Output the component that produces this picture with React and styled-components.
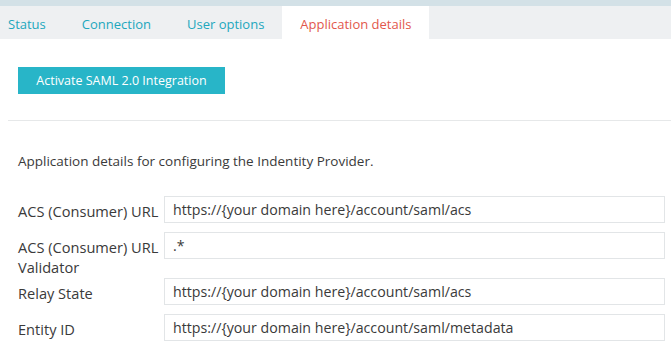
import React from "react";
import styled, { createGlobalStyle } from "styled-components";

const GlobalStyle = createGlobalStyle`
  html, body {
    margin: 0;
    padding: 0;
    background: #fff;
  }
  body {
    font-family: "Open Sans", Lato, sans-serif;
    color: #3a3a3a;
  }
`;

const Page = styled.div`
  width: 671px;
  height: 364px;
  overflow: hidden;
  border-top: 6px solid #d3e1e7;
  box-sizing: border-box;
`;

const TabBar = styled.div`
  display: flex;
  height: 33px;
  background: #eef0f2;
`;

const Tab = styled.div`
  display: flex;
  align-items: center;
  padding: 3px 18px 0 ${({ $first }) => ($first ? 8 : 18)}px;
  font-size: 13px;
  color: ${({ $active }) => ($active ? "#e2574c" : "#22a7bd")};
  background: ${({ $active }) => ($active ? "#fff" : "transparent")};
`;

const Toolbar = styled.div`
  padding: 28px 18px 26px;
`;

const Button = styled.button`
  width: 207px;
  height: 27px;
  border: none;
  background: #28b5c8;
  color: #fff;
  font-family: "Open Sans", Lato, sans-serif;
  font-size: 12.5px;
  cursor: pointer;
`;

const Rule = styled.hr`
  margin: 0 0 0 8px;
  border: none;
  border-top: 1px solid #e6e8e9;
`;

const Intro = styled.p`
  margin: 31px 18px 26px;
  font-size: 13.5px;
`;

const Form = styled.div`
  display: flex;
  flex-direction: column;
  gap: 9px;
  padding: 0 6px 0 18px;
`;

const Row = styled.div`
  display: grid;
  grid-template-columns: 146px 1fr;
  align-items: start;
`;

const Label = styled.label`
  font-size: 14.6px;
  line-height: 20px;
  padding-top: 5px;
  margin-bottom: -8px;
`;

const Input = styled.input`
  box-sizing: border-box;
  width: 100%;
  height: 27px;
  border: 1px solid #e2e5e7;
  padding: 0 8px;
  font-family: "Open Sans", Lato, sans-serif;
  font-size: 14.2px;
  color: #3a3a3a;
  outline: none;
`;

const fields = [
  ["ACS (Consumer) URL", "https://{your domain here}/account/saml/acs"],
  ["ACS (Consumer) URL Validator", ".*"],
  ["Relay State", "https://{your domain here}/account/saml/acs"],
  ["Entity ID", "https://{your domain here}/account/saml/metadata"],
];

const App = () => (
  <>
    <GlobalStyle />
    <Page>
      <TabBar>
        <Tab $first>Status</Tab>
        <Tab>Connection</Tab>
        <Tab>User options</Tab>
        <Tab $active>Application details</Tab>
      </TabBar>
      <Toolbar>
        <Button>Activate SAML 2.0 Integration</Button>
      </Toolbar>
      <Rule />
      <Intro>Application details for configuring the Indentity Provider.</Intro>
      <Form>
        {fields.map(([label, value]) => (
          <Row key={label}>
            <Label>{label}</Label>
            <Input defaultValue={value} readOnly />
          </Row>
        ))}
      </Form>
    </Page>
  </>
);

export default App;
